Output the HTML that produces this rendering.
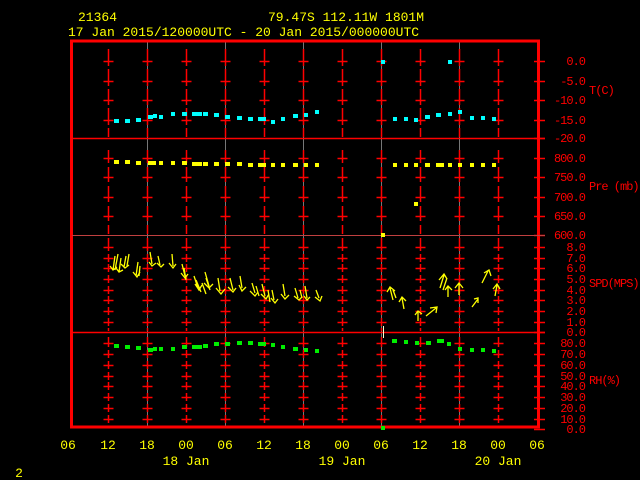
<!DOCTYPE html>
<html><head><meta charset="utf-8"><style>
html,body{margin:0;padding:0;background:#000;width:640px;height:480px;overflow:hidden}
svg{display:block}
text{font-family:"Liberation Mono",monospace;font-size:13px}
.ax text{font-size:12px;letter-spacing:-1px}
</style></head><body>
<svg width="640" height="480" viewBox="0 0 640 480" xmlns="http://www.w3.org/2000/svg">
<g fill="#ffff00">
<text x="78" y="21">21364</text>
<text x="268" y="21">79.47S  112.11W  1801M</text>
<text x="68" y="36">17 Jan 2015/120000UTC - 20 Jan 2015/000000UTC</text>
</g>
<g stroke="#777" stroke-width="1">
<line x1="147.5" y1="42" x2="147.5" y2="426"/><line x1="225.5" y1="42" x2="225.5" y2="426"/>
<line x1="303.5" y1="42" x2="303.5" y2="426"/><line x1="381.5" y1="42" x2="381.5" y2="426"/>
<line x1="459.5" y1="42" x2="459.5" y2="426"/>
</g>
<g id="c" stroke="#ff0000" stroke-width="1.5" fill="none"></g>
<script>
(function(){
var ns="http://www.w3.org/2000/svg",g=document.getElementById('c');
function L(x1,y1,x2,y2){var l=document.createElementNS(ns,'line');l.setAttribute('x1',x1);l.setAttribute('y1',y1);l.setAttribute('x2',x2);l.setAttribute('y2',y2);g.appendChild(l);}
var xs=[108,147,186,225,264,303,342,381,420,459,498];
var T=[61,81,100,120],P=[158,177,197,216],S=[247,258,268,279,290,300,311,322],R=[343,354,365,376,386,397,408,419];
xs.forEach(function(x){
 x+=0.5;
 L(x,49,x,66);L(x,69,x,86);L(x,89,x,105);L(x,108,x,125);L(x,128,x,137);
 L(x,150,x,163);L(x,167,x,182);L(x,186,x,202);L(x,206,x,221);L(x,225,x,234);
 L(x,238,x,251);L(x,254,x,262);L(x,264,x,272);L(x,275,x,283);L(x,286,x,294);L(x,296,x,304);L(x,307,x,315);L(x,318,x,326);L(x,328,x,331);
 L(x,337,x,347);L(x,350,x,358);L(x,361,x,369);L(x,372,x,380);L(x,382,x,390);L(x,393,x,401);L(x,404,x,412);L(x,415,x,423);
 T.concat(P,S,R).forEach(function(y){L(x-5,y+0.5,x+5,y+0.5);});
});
T.concat([138],P,[235],S,[332],R,[429]).forEach(function(y){L(534,y+0.5,545,y+0.5);});
})();
</script>
<g fill="none" stroke="#ff0000">
<rect x="71.5" y="41" width="467" height="386" stroke-width="3"/>
<line x1="72" y1="138.5" x2="545" y2="138.5" stroke-width="1.5"/>
<line x1="72" y1="235.5" x2="545" y2="235.5" stroke-width="1" stroke="#c04040"/>
<line x1="72" y1="332.5" x2="545" y2="332.5" stroke-width="1.5"/>
</g>
<g class="ax" fill="#ff0000" text-anchor="end">
<text x="585" y="65">0.0</text><text x="585" y="85">-5.0</text><text x="585" y="104">-10.0</text><text x="585" y="124">-15.0</text><text x="585" y="142">-20.0</text>
<text x="585" y="162">800.0</text><text x="585" y="181">750.0</text><text x="585" y="201">700.0</text><text x="585" y="220">650.0</text><text x="585" y="239">600.0</text>
<text x="585" y="251">8.0</text><text x="585" y="262">7.0</text><text x="585" y="272">6.0</text><text x="585" y="283">5.0</text><text x="585" y="294">4.0</text><text x="585" y="304">3.0</text><text x="585" y="315">2.0</text><text x="585" y="326">1.0</text><text x="585" y="336">0.0</text>
<text x="585" y="347">80.0</text><text x="585" y="358">70.0</text><text x="585" y="369">60.0</text><text x="585" y="380">50.0</text><text x="585" y="390">40.0</text><text x="585" y="401">30.0</text><text x="585" y="412">20.0</text><text x="585" y="423">10.0</text><text x="585" y="433">0.0</text>
</g>
<g class="ax" fill="#ff0000">
<text x="589" y="94">T(C)</text><text x="589" y="190">Pre (mb)</text><text x="589" y="287">SPD(MPS)</text><text x="589" y="384">RH(%)</text>
</g>
<g fill="#00ffff">
<rect x="114" y="119" width="5" height="4"/><rect x="125" y="119" width="5" height="4"/><rect x="136" y="118" width="5" height="4"/><rect x="148" y="115" width="5" height="4"/><rect x="153" y="114" width="4" height="4"/><rect x="159" y="115" width="4" height="4"/><rect x="171" y="112" width="4" height="4"/><rect x="182" y="112" width="5" height="4"/><rect x="192" y="112" width="10" height="4"/><rect x="203" y="112" width="5" height="4"/><rect x="214" y="113" width="5" height="4"/><rect x="225" y="115" width="5" height="4"/><rect x="237" y="116" width="5" height="4"/><rect x="248" y="117" width="5" height="4"/><rect x="258" y="117" width="8" height="4"/><rect x="271" y="120" width="4" height="4"/><rect x="281" y="117" width="4" height="4"/><rect x="293" y="114" width="5" height="4"/><rect x="304" y="113" width="4" height="4"/><rect x="315" y="110" width="4" height="4"/>
<rect x="381" y="60" width="4" height="4"/><rect x="448" y="60" width="4" height="4"/>
<rect x="393" y="117" width="4" height="4"/><rect x="404" y="117" width="4" height="4"/><rect x="414" y="118" width="4" height="4"/><rect x="425" y="115" width="5" height="4"/><rect x="436" y="113" width="5" height="4"/><rect x="448" y="112" width="4" height="4"/><rect x="458" y="110" width="4" height="4"/><rect x="470" y="116" width="4" height="4"/><rect x="481" y="116" width="4" height="4"/><rect x="492" y="117" width="4" height="4"/>
</g>
<g fill="#ffff00">
<rect x="114" y="160" width="5" height="4"/><rect x="125" y="160" width="5" height="4"/><rect x="136" y="161" width="5" height="4"/><rect x="148" y="161" width="8" height="4"/><rect x="159" y="161" width="4" height="4"/><rect x="171" y="161" width="4" height="4"/><rect x="182" y="161" width="5" height="4"/><rect x="192" y="162" width="10" height="4"/><rect x="203" y="162" width="5" height="4"/><rect x="214" y="162" width="5" height="4"/><rect x="225" y="162" width="5" height="4"/><rect x="237" y="162" width="5" height="4"/><rect x="248" y="163" width="5" height="4"/><rect x="258" y="163" width="8" height="4"/><rect x="271" y="163" width="4" height="4"/><rect x="281" y="163" width="4" height="4"/><rect x="293" y="163" width="5" height="4"/><rect x="304" y="163" width="4" height="4"/><rect x="315" y="163" width="4" height="4"/>
<rect x="381" y="233" width="4" height="4"/><rect x="414" y="202" width="4" height="4"/>
<rect x="393" y="163" width="4" height="4"/><rect x="404" y="163" width="4" height="4"/><rect x="414" y="163" width="4" height="4"/><rect x="425" y="163" width="5" height="4"/><rect x="436" y="163" width="8" height="4"/><rect x="448" y="163" width="4" height="4"/><rect x="458" y="163" width="4" height="4"/><rect x="470" y="163" width="4" height="4"/><rect x="481" y="163" width="4" height="4"/><rect x="492" y="163" width="4" height="4"/>
</g>
<g stroke="#ffff00" stroke-width="1.3" fill="none">
<path d="M115,256 L113,270 M110,266 L113,270 L117,267 M118,254 L115,270 M121,258 L119,272 M116,268 L119,272 L123,270"/>
<path d="M126,256 L124,267 M121,264 L125,268 L129,265 M129,254 L127,266"/>
<path d="M138,262 L136,276 M133,272 L137,277 L140,272 M140,266 L139,276"/>
<path d="M150,252 L152,264 M149,262 L152,266 L156,263"/>
<path d="M158,256 L160,265 M157,263 L161,267 L164,264"/>
<path d="M172,254 L173,266 M169,263 L173,268 L176,264"/>
<path d="M182,264 L185,276 M181,273 L185,278 L188,274 M184,268 L186,280"/>
<path d="M194,276 L198,288 M195,284 L199,290 L202,285 M196,280 L201,292"/>
<path d="M205,272 L209,286 M204,283 L209,288 L213,284 M206,278 L210,290 M202,283 L206,294"/>
<path d="M218,278 L220,291 M216,288 L221,294 L225,289"/>
<path d="M230,278 L233,290 M228,287 L233,292 L236,288"/>
<path d="M240,276 L242,288 M239,285 L242,291 L246,287"/>
<path d="M252,283 L255,293 M250,291 L255,296 L258,292 M256,286 L259,296"/>
<path d="M262,284 L265,296 M261,294 L266,299 L269,294 M268,290 L270,302"/>
<path d="M272,290 L274,300 M271,298 L275,303 L278,299"/>
<path d="M283,284 L285,296 M281,294 L285,299 L289,295"/>
<path d="M295,288 L298,298 M294,296 L299,300 L302,297 M300,290 L302,298"/>
<path d="M305,286 L307,298 M304,296 L307,300 L310,297"/>
<path d="M316,290 L319,298 M315,297 L320,301 L322,296"/>
<path d="M393,300 L390,288 M387,292 L390,287 L395,291 M396,298 L393,290"/>
<path d="M404,309 L402,298 M399,302 L402,297 L406,301"/>
<path d="M418,321 L418,311 M415,315 L418,311 L422,314"/>
<path d="M426,316 L436,308 M430,308 L437,307 L436,313"/>
<path d="M440,288 L444,275 M439,280 L444,274 L447,279 M443,290 L447,278"/>
<path d="M448,297 L448,286 M445,290 L448,286 L452,290"/>
<path d="M459,295 L459,284 M455,288 L459,283 L463,288"/>
<path d="M472,307 L478,299 M474,299 L478,298 L478,303"/>
<path d="M482,283 L488,271 M484,273 L489,270 L491,276"/>
<path d="M495,296 L497,285 M493,289 L497,284 L500,289"/>
</g>
<line x1="383.5" y1="326" x2="383.5" y2="338" stroke="#ffffcc" stroke-width="1"/>
<g fill="#00ee00">
<rect x="114" y="344" width="5" height="4"/><rect x="125" y="345" width="5" height="4"/><rect x="136" y="346" width="5" height="4"/><rect x="148" y="348" width="5" height="4"/><rect x="153" y="347" width="4" height="4"/><rect x="159" y="347" width="4" height="4"/><rect x="171" y="347" width="4" height="4"/><rect x="182" y="345" width="5" height="4"/><rect x="192" y="345" width="10" height="4"/><rect x="203" y="344" width="5" height="4"/><rect x="214" y="342" width="5" height="4"/><rect x="225" y="342" width="5" height="4"/><rect x="237" y="341" width="5" height="4"/><rect x="248" y="341" width="5" height="4"/><rect x="258" y="342" width="8" height="4"/><rect x="271" y="343" width="4" height="4"/><rect x="281" y="345" width="4" height="4"/><rect x="293" y="347" width="5" height="4"/><rect x="304" y="348" width="4" height="4"/><rect x="315" y="349" width="4" height="4"/>
<rect x="381" y="426" width="4" height="4"/>
<rect x="392" y="339" width="5" height="4"/><rect x="404" y="340" width="4" height="4"/><rect x="415" y="341" width="4" height="4"/><rect x="426" y="341" width="5" height="4"/><rect x="437" y="339" width="7" height="4"/><rect x="447" y="342" width="4" height="4"/><rect x="458" y="347" width="4" height="4"/><rect x="470" y="348" width="4" height="4"/><rect x="481" y="348" width="4" height="4"/><rect x="492" y="349" width="4" height="4"/>
</g>
<g fill="#ffff00" text-anchor="middle">
<text x="68" y="449">06</text><text x="108" y="449">12</text><text x="147" y="449">18</text><text x="186" y="449">00</text><text x="225" y="449">06</text><text x="264" y="449">12</text><text x="303" y="449">18</text><text x="342" y="449">00</text><text x="381" y="449">06</text><text x="420" y="449">12</text><text x="459" y="449">18</text><text x="498" y="449">00</text><text x="537" y="449">06</text>
<text x="186" y="465">18 Jan</text><text x="342" y="465">19 Jan</text><text x="498" y="465">20 Jan</text>
<text x="19" y="477">2</text>
</g>
</svg>
</body></html>
